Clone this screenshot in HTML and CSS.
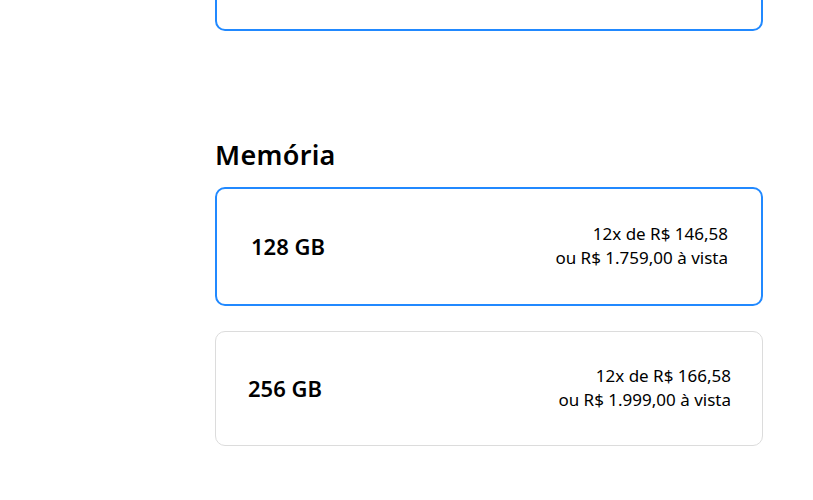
FILE: index.html
```html
<!DOCTYPE html>
<html lang="pt-BR">
<head>
    <meta charset="UTF-8">
    <meta name="viewport" content="width=device-width, initial-scale=1.0">
    <title>Memória</title>
    <link rel="stylesheet" href="styles.css">
</head>
<body>
    <div class="container">
        <div class="option-card selected previous"></div>

        <div class="section">
            <h2 class="section-title">Memória</h2>

            <div class="option-list">
                <div class="option-card selected">
                    <span class="option-name">128 GB</span>
                    <div class="option-price">
                        <p>12x de R$ 146,58</p>
                        <p>ou R$ 1.759,00 à vista</p>
                    </div>
                </div>

                <div class="option-card">
                    <span class="option-name">256 GB</span>
                    <div class="option-price">
                        <p>12x de R$ 166,58</p>
                        <p>ou R$ 1.999,00 à vista</p>
                    </div>
                </div>
            </div>
        </div>
    </div>
</body>
</html>
```

FILE: styles.css
```css
body {
    font-family: 'Noto Sans', 'Open Sans', sans-serif;
    margin: 0;
    background-color: #fff;
    color: #000;
}

.container {
    width: 548px;
    margin-left: 215px;
}

.option-card {
    display: flex;
    align-items: center;
    justify-content: space-between;
    border: 1px solid #dcdcdc;
    border-radius: 10px;
    padding: 0 31px 2px 32px;
    height: 111px;
}

.option-card.selected {
    border: 2px solid #2189ff;
    padding: 0 33px 2px 34px;
    height: 113px;
}

.previous {
    margin-top: -88px;
}

.section {
    margin-top: 109px;
}

.section-title {
    font-size: 27px;
    font-weight: 600;
    line-height: 30px;
    margin: 0 0 17px 0;
    letter-spacing: 0.3px;
}

.option-list {
    display: flex;
    flex-direction: column;
    gap: 25px;
}

.option-name {
    font-size: 22px;
    font-weight: 600;
}

.option-price {
    text-align: right;
    font-size: 17px;
    line-height: 24px;
}

.option-price p {
    margin: 0;
}
```
